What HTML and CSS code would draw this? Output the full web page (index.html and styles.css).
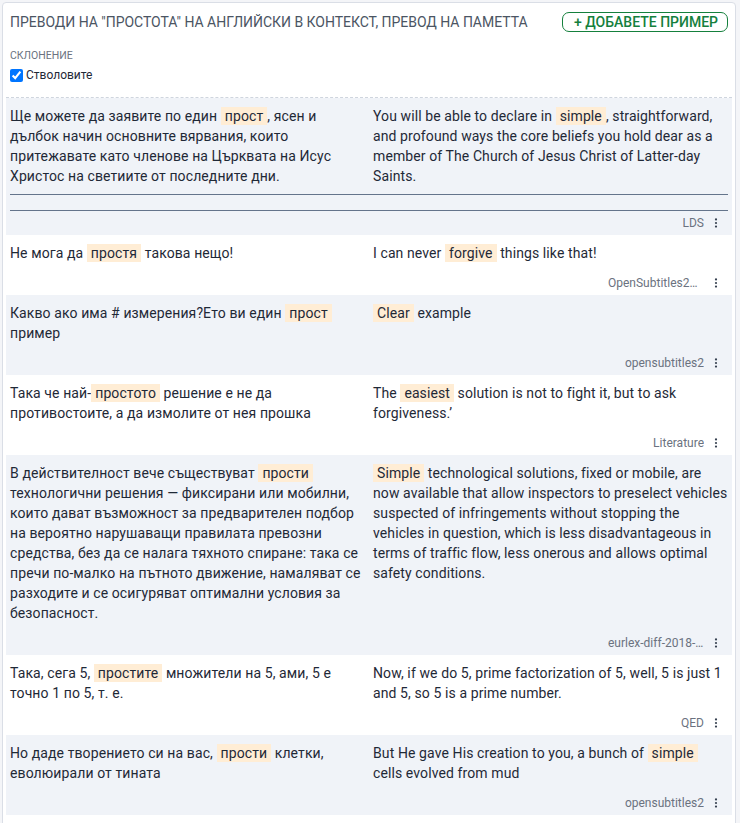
FILE: index.html
```html
<!DOCTYPE html>
<html lang="bg">
<head>
<meta charset="utf-8">
<title>Преводи на "простота"</title>
<link rel="stylesheet" href="styles.css">
</head>
<body>
<div class="page">
  <section class="card">
    <header class="head">
      <h2 class="title">Преводи на "простота" на английски в контекст, превод на паметта</h2>
      <button class="add-btn" type="button">+ Добавете пример</button>
    </header>
    <div class="filter">
      <div class="filter-label">Склонение</div>
      <label class="check"><input type="checkbox" checked><span>Стволовите</span></label>
    </div>
    <div class="list">
      <div class="row alt">
        <div class="pair">
          <div class="src">Ще можете да заявите по един <span class="kw">прост</span>, ясен и дълбок начин основните вярвания, които притежавате като членове на Църквата на Исус Христос на светиите от последните дни.</div>
          <div class="tgt">You will be able to declare in <span class="kw">simple</span>, straightforward, and profound ways the core beliefs you hold dear as a member of The Church of Jesus Christ of Latter-day Saints.</div>
        </div>
        <div class="sep"></div>
        <div class="foot"><span class="origin">LDS</span><button class="more" type="button"><svg width="4" height="10" viewBox="0 0 4 10"><circle cx="2" cy="1.4" r="1.1"/><circle cx="2" cy="5" r="1.1"/><circle cx="2" cy="8.6" r="1.1"/></svg></button></div>
      </div>
      <div class="row">
        <div class="pair">
          <div class="src">Не мога да <span class="kw">простя</span> такова нещо!</div>
          <div class="tgt">I can never <span class="kw">forgive</span> things like that!</div>
        </div>
        <div class="foot"><span class="origin">OpenSubtitles2018.v3</span><button class="more" type="button"><svg width="4" height="10" viewBox="0 0 4 10"><circle cx="2" cy="1.4" r="1.1"/><circle cx="2" cy="5" r="1.1"/><circle cx="2" cy="8.6" r="1.1"/></svg></button></div>
      </div>
      <div class="row alt">
        <div class="pair">
          <div class="src">Какво ако има # измерения?Ето ви един <span class="kw">прост</span> пример</div>
          <div class="tgt"><span class="kw">Clear</span> example</div>
        </div>
        <div class="foot"><span class="origin">opensubtitles2</span><button class="more" type="button"><svg width="4" height="10" viewBox="0 0 4 10"><circle cx="2" cy="1.4" r="1.1"/><circle cx="2" cy="5" r="1.1"/><circle cx="2" cy="8.6" r="1.1"/></svg></button></div>
      </div>
      <div class="row">
        <div class="pair">
          <div class="src">Така че най-<span class="kw">простото</span> решение е не да противостоите, а да измолите от нея прошка</div>
          <div class="tgt">The <span class="kw">easiest</span> solution is not to fight it, but to ask forgiveness.’</div>
        </div>
        <div class="foot"><span class="origin">Literature</span><button class="more" type="button"><svg width="4" height="10" viewBox="0 0 4 10"><circle cx="2" cy="1.4" r="1.1"/><circle cx="2" cy="5" r="1.1"/><circle cx="2" cy="8.6" r="1.1"/></svg></button></div>
      </div>
      <div class="row alt">
        <div class="pair">
          <div class="src">В действителност вече съществуват <span class="kw">прости</span> технологични решения — фиксирани или мобилни, които дават възможност за предварителен подбор на вероятно нарушаващи правилата превозни средства, без да се налага тяхното спиране: така се пречи по-малко на пътното движение, намаляват се разходите и се осигуряват оптимални условия за безопасност.</div>
          <div class="tgt"><span class="kw">Simple</span> technological solutions, fixed or mobile, are now available that allow inspectors to preselect vehicles suspected of infringements without stopping the vehicles in question, which is less disadvantageous in terms of traffic flow, less onerous and allows optimal safety conditions.</div>
        </div>
        <div class="foot"><span class="origin">eurlex-diff-2018-06-20</span><button class="more" type="button"><svg width="4" height="10" viewBox="0 0 4 10"><circle cx="2" cy="1.4" r="1.1"/><circle cx="2" cy="5" r="1.1"/><circle cx="2" cy="8.6" r="1.1"/></svg></button></div>
      </div>
      <div class="row">
        <div class="pair">
          <div class="src">Така, сега 5, <span class="kw">простите</span> множители на 5, ами, 5 е точно 1 по 5, т. е.</div>
          <div class="tgt">Now, if we do 5, prime factorization of 5, well, 5 is just 1 and 5, so 5 is a prime number.</div>
        </div>
        <div class="foot"><span class="origin">QED</span><button class="more" type="button"><svg width="4" height="10" viewBox="0 0 4 10"><circle cx="2" cy="1.4" r="1.1"/><circle cx="2" cy="5" r="1.1"/><circle cx="2" cy="8.6" r="1.1"/></svg></button></div>
      </div>
      <div class="row alt">
        <div class="pair">
          <div class="src">Но даде творението си на вас, <span class="kw">прости</span> клетки, еволюирали от тината</div>
          <div class="tgt">But He gave His creation to you, a bunch of <span class="kw">simple</span> cells evolved from mud</div>
        </div>
        <div class="foot"><span class="origin">opensubtitles2</span><button class="more" type="button"><svg width="4" height="10" viewBox="0 0 4 10"><circle cx="2" cy="1.4" r="1.1"/><circle cx="2" cy="5" r="1.1"/><circle cx="2" cy="8.6" r="1.1"/></svg></button></div>
      </div>
    </div>
  </section>
</div>
</body>
</html>
```
FILE: styles.css
```css
* { box-sizing: border-box; }
html, body { margin: 0; padding: 0; }
body {
  background: #f4f5f8;
  font-family: Roboto, "Noto Sans", "Liberation Sans", sans-serif;
  color: #1f2937;
  overflow: hidden;
}
.page {
  padding: 2px 4px 0 2px;
}
.card {
  background: #ffffff;
  border: 1px solid #dadee6;
  border-radius: 4px;
  padding: 0 3px 12px;
}
.head {
  display: flex;
  align-items: center;
  justify-content: space-between;
  margin-top: 9px;
  padding: 0 4px;
  height: 20px;
}
.title {
  margin: 0;
  font-size: 14px;
  font-weight: 400;
  line-height: 20px;
  letter-spacing: -0.03px;
  text-transform: uppercase;
  color: #4b5563;
}
.add-btn {
  font-family: inherit;
  font-size: 14px;
  font-weight: 500;
  line-height: 18px;
  height: 20px;
  padding: 0 9px 0 11px;
  text-transform: uppercase;
  color: #15803d;
  background: #ffffff;
  border: 1px solid #15803d;
  border-radius: 7px;
}
.filter {
  padding: 0 4px;
  margin-top: 16px;
  margin-bottom: 12px;
}
.filter-label {
  font-size: 10.5px;
  line-height: 16px;
  text-transform: uppercase;
  color: #6b7280;
}
.check {
  display: flex;
  align-items: center;
  margin-top: 1px;
  height: 20px;
  font-size: 12px;
  color: #1f2937;
}
.check input {
  margin: 0 3px 0 0;
  width: 13px;
  height: 13px;
}
.list {
  border-top: 1px dashed #cfd5de;
}
.row {
  padding: 8px 4px 0;
  background: #ffffff;
}
.row.alt {
  background: #f0f3f8;
}
.pair {
  display: grid;
  grid-template-columns: 1fr 1fr;
  column-gap: 8px;
  font-size: 14px;
  line-height: 20px;
  letter-spacing: 0.1px;
  color: #1f2937;
}
.kw {
  background: #ffedd5;
  padding: 1px 4px;
}
.sep {
  margin-top: 8px;
  height: 17px;
  border-top: 1px solid #64748b;
  border-bottom: 1px solid #64748b;
}
.pair + .foot {
  margin-top: 8px;
}
.foot {
  display: flex;
  justify-content: flex-end;
  align-items: center;
  height: 24px;
}
.origin {
  font-size: 12px;
  line-height: 16px;
  color: #6b7280;
  max-width: 96px;
  white-space: nowrap;
  overflow: hidden;
  text-overflow: ellipsis;
}
.more {
  width: 24px;
  height: 24px;
  padding: 0;
  border: 0;
  background: transparent;
  display: flex;
  align-items: center;
  justify-content: center;
  fill: #374151;
}
```
